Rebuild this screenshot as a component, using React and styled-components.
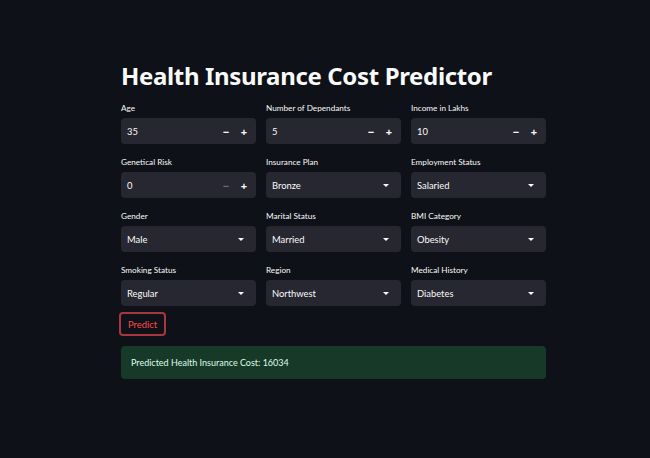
import React from "react";
import styled, { createGlobalStyle } from "styled-components";

const GlobalStyle = createGlobalStyle`
  html, body {
    margin: 0;
    padding: 0;
    background: #0e1117;
  }
  body {
    font-family: Lato, "Noto Sans", sans-serif;
    color: #fafafa;
  }
`;

const Page = styled.div`
  width: 650px;
  height: 458px;
  background: #0e1117;
  padding-left: 121px;
  box-sizing: border-box;
`;

const Main = styled.div`
  width: 425px;
  padding-top: 58px;
  display: flex;
  flex-direction: column;
`;

const Title = styled.h1`
  margin: 0 0 8px 0;
  font-family: "Noto Sans", sans-serif;
  font-size: 24px;
  font-weight: 700;
  letter-spacing: -0.35px;
  line-height: 36px;
  color: #fafafa;
`;

const Grid = styled.div`
  display: grid;
  grid-template-columns: repeat(3, 135px);
  column-gap: 10px;
  row-gap: 12px;
`;

const Field = styled.div`
  display: flex;
  flex-direction: column;
`;

const Label = styled.label`
  font-size: 8.2px;
  line-height: 12px;
  height: 16px;
  color: #fafafa;
`;

const Box = styled.div`
  height: 26px;
  background: #262730;
  border-radius: 4px;
  display: flex;
  align-items: center;
  padding-left: 6px;
  padding-right: 3px;
  box-sizing: border-box;
  font-size: 9.4px;
  color: #fafafa;
`;

const Value = styled.span`
  flex: 1;
`;

const StepBtn = styled.span`
  width: 18px;
  text-align: center;
  font-family: "Noto Sans", sans-serif;
  font-size: 11px;
  font-weight: 700;
  color: ${(p) => (p.disabled ? "#6b6d75" : "#fafafa")};
`;

const Caret = styled.span`
  width: 0;
  height: 0;
  margin-right: 9px;
  border-left: 3px solid transparent;
  border-right: 3px solid transparent;
  border-top: 3px solid #fafafa;
`;

const PredictButton = styled.button`
  align-self: flex-start;
  margin-top: 6px;
  margin-left: -2px;
  height: 24px;
  padding: 0 7px;
  background: #0e1117;
  border: 2px solid #a8383d;
  border-radius: 4px;
  color: #ff4b4b;
  font-family: Lato, sans-serif;
  font-size: 9.4px;
`;

const Success = styled.div`
  margin-top: 10px;
  height: 33px;
  background: #173928;
  border-radius: 4px;
  display: flex;
  align-items: center;
  padding-left: 10px;
  font-size: 9px;
  color: #dffde9;
`;

const fields = [
  { label: "Age", value: "35", type: "number" },
  { label: "Number of Dependants", value: "5", type: "number" },
  { label: "Income in Lakhs", value: "10", type: "number" },
  { label: "Genetical Risk", value: "0", type: "number", minDisabled: true },
  { label: "Insurance Plan", value: "Bronze" },
  { label: "Employment Status", value: "Salaried" },
  { label: "Gender", value: "Male" },
  { label: "Marital Status", value: "Married" },
  { label: "BMI Category", value: "Obesity" },
  { label: "Smoking Status", value: "Regular" },
  { label: "Region", value: "Northwest" },
  { label: "Medical History", value: "Diabetes" },
];

export default function App() {
  return (
    <Page>
      <GlobalStyle />
      <Main>
        <Title>Health Insurance Cost Predictor</Title>
        <Grid>
          {fields.map((f) => (
            <Field key={f.label}>
              <Label>{f.label}</Label>
              <Box>
                <Value>{f.value}</Value>
                {f.type === "number" ? (
                  <>
                    <StepBtn disabled={f.minDisabled}>−</StepBtn>
                    <StepBtn>+</StepBtn>
                  </>
                ) : (
                  <Caret />
                )}
              </Box>
            </Field>
          ))}
        </Grid>
        <PredictButton>Predict</PredictButton>
        <Success>Predicted Health Insurance Cost: 16034</Success>
      </Main>
    </Page>
  );
}
